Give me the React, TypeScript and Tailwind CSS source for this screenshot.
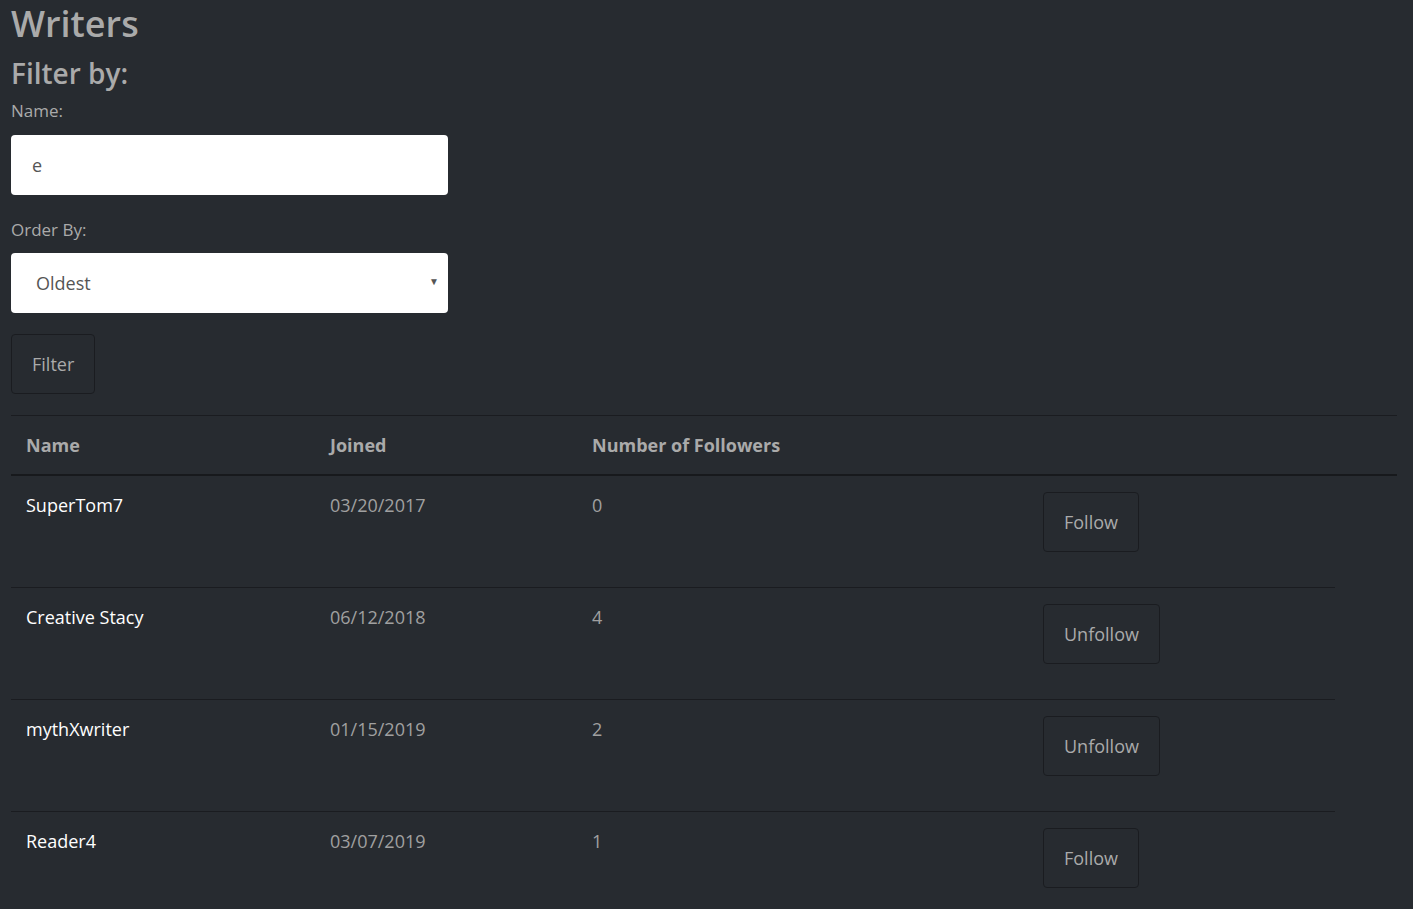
import React, { useState } from 'react';

const writers = [
    { name: 'SuperTom7', joined: '03/20/2017', followers: 0, following: false },
    { name: 'Creative Stacy', joined: '06/12/2018', followers: 4, following: true },
    { name: 'mythXwriter', joined: '01/15/2019', followers: 2, following: true },
    { name: 'Reader4', joined: '03/07/2019', followers: 1, following: false },
];

const App = () => {
    const [name, setName] = useState('e');
    const [order, setOrder] = useState('oldest');

    return (
        <div className="min-h-screen bg-[#272b30] text-[#aaaaaa] px-[11px] text-[18px] font-['Open_Sans',sans-serif]">
            <h1 className="text-[36px] leading-[48px] font-semibold text-[#aaaaaa]">Writers</h1>
            <h3 className="text-[28px] leading-[34px] font-semibold text-[#aaaaaa] mt-[8px] mb-[8px]">Filter by:</h3>

            <label className="block text-[17px] leading-[26px] mb-[11px]">Name:</label>
            <input
                type="text"
                value={name}
                onChange={(e) => setName(e.target.value)}
                className="block w-[437px] h-[60px] bg-white rounded-[4px] px-[21px] text-[18px] text-[#555555] outline-none mb-[22px]"
            />

            <label className="block text-[17px] leading-[26px] mb-[10px]">Order By:</label>
            <div className="relative w-[437px] mb-[21px]">
                <select
                    value={order}
                    onChange={(e) => setOrder(e.target.value)}
                    className="block w-full h-[60px] bg-white rounded-[4px] pl-[25px] text-[18px] text-[#555555] appearance-none outline-none"
                >
                    <option value="oldest">Oldest</option>
                    <option value="newest">Newest</option>
                </select>
                <span className="absolute right-[9px] top-[21px] text-[10px] text-[#555555] pointer-events-none">▼</span>
            </div>

            <button className="h-[60px] px-[20px] border border-[#1a1c20] rounded-[4px] text-[#aaaaaa] mb-[21px]">Filter</button>

            <div className="w-[1386px] border-t border-[#1a1c20]">
                <div className="flex h-[60px] items-center border-b-2 border-[#17191c] font-bold">
                    <div className="w-[304px] pl-[15px]">Name</div>
                    <div className="w-[262px] pl-[15px]">Joined</div>
                    <div className="pl-[15px]">Number of Followers</div>
                </div>
            </div>
            <div className="w-[1324px]">
                {writers.map((w) => (
                    <div key={w.name} className="flex h-[112px] border-b border-[#1a1c20] pt-[16px]">
                        <div className="w-[304px] pl-[15px] text-white">{w.name}</div>
                        <div className="w-[262px] pl-[15px] text-[#a0a0a0]">{w.joined}</div>
                        <div className="w-[451px] pl-[15px] text-[#a0a0a0]">{w.followers}</div>
                        <div className="pl-[15px]">
                            <button className="h-[60px] px-[20px] border border-[#1a1c20] rounded-[4px] text-[#aaaaaa]">
                                {w.following ? 'Unfollow' : 'Follow'}
                            </button>
                        </div>
                    </div>
                ))}
            </div>
        </div>
    );
};

export default App;
